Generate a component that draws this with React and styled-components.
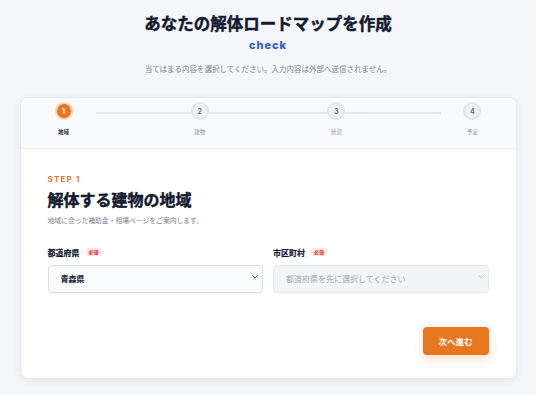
import React from 'react';
import styled, { createGlobalStyle, css } from 'styled-components';

const GlobalStyle = createGlobalStyle`
  html, body {
    margin: 0;
    padding: 0;
    background: #f4f6f9;
  }
  body {
    font-family: "Noto Sans CJK JP", "Noto Sans", sans-serif;
    color: #111a2e;
  }
`

const jp = `"Noto Sans CJK JP", "Noto Sans", sans-serif`;

// the installed CJK font tops out at bold, so heavy titles get a thin stroke
const heavy = w => css`
  font-weight: 700;
  -webkit-text-stroke: ${w} currentColor;
`

const Page = styled.div`
  padding-top: 13px;
  padding-bottom: 16px;
`

const Header = styled.header`
  display: flex;
  flex-direction: column;
  align-items: center;
`

const Title = styled.h1`
  margin: 0;
  font-family: ${jp};
  font-size: 16.5px;
  line-height: 20px;
  ${heavy('0.45px')}
  color: #111a2e;
`

const Check = styled.div`
  margin-top: 4px;
  font-family: Inter, "Noto Sans", sans-serif;
  font-size: 11px;
  line-height: 16px;
  font-weight: 800;
  letter-spacing: 1px;
  color: #2d5bd3;
`

const Lead = styled.p`
  margin: 10px 0 0;
  font-size: 7.5px;
  line-height: 12px;
  color: #7a8190;
`

const Card = styled.section`
  width: 497px;
  margin: 22px auto 0;
  box-sizing: border-box;
  background: #fff;
  border: 1px solid #e6e9ee;
  border-radius: 8px;
  box-shadow: 0 2px 10px rgba(15, 23, 42, 0.06);
  overflow: hidden;
`

const Stepper = styled.div`
  display: flex;
  align-items: flex-start;
  padding: 4px 34px 12px;
  background: #f9fafb;
  border-bottom: 1px solid #eef0f3;
`

const StepItem = styled.div`
  width: 18px;
  display: flex;
  flex-direction: column;
  align-items: center;
`

const Circle = styled.div`
  width: 14px;
  height: 14px;
  margin: 2px;
  border-radius: 50%;
  display: flex;
  align-items: center;
  justify-content: center;
  font-family: Inter, sans-serif;
  font-size: 7px;
  font-weight: 700;
  background: #eef1f5;
  color: #6b7280;
  box-shadow: 0 0 0 2px #dfe4ea;
  ${props => props.active && css`
    background: #e8761f;
    color: #fff;
    box-shadow: 0 0 0 2px #fbd5b5;
  `}
`

const StepLabel = styled.div`
  margin-top: 8px;
  white-space: nowrap;
  font-size: 5.5px;
  line-height: 8px;
  color: #8a919c;
  ${props => props.active && css`
    color: #1f2937;
    font-weight: 700;
  `}
`

/* each connector takes an equal share; the line itself is trimmed at the ends */
const Connector = styled.div`
  flex: 1;
  display: flex;
  height: 2px;
  margin-top: 10px;
  &::before {
    content: '';
    flex: 1;
    background: #e3e7ec;
    margin-left: ${props => (props.first ? '23px' : '0')};
    margin-right: ${props => (props.last ? '22px' : '0')};
  }
`

const Body = styled.div`
  padding: 25px 27px 23px;
`

const StepTag = styled.div`
  font-family: Inter, sans-serif;
  font-size: 8px;
  line-height: 10px;
  font-weight: 700;
  letter-spacing: 1.2px;
  color: #e0712a;
`

const Heading = styled.h2`
  margin: 4px 0 0;
  font-size: 16px;
  line-height: 22px;
  ${heavy('0.45px')}
  color: #111a2e;
`

const Desc = styled.p`
  margin: 5px 0 0;
  font-size: 6.8px;
  line-height: 10px;
  color: #7a8190;
`

const Fields = styled.div`
  display: grid;
  grid-template-columns: 1fr 1fr;
  gap: 10px;
  margin-top: 22px;
`

const Field = styled.div`
  display: flex;
  flex-direction: column;
`

const LabelRow = styled.div`
  display: flex;
  align-items: center;
  height: 10px;
`

const Label = styled.label`
  font-size: 8px;
  ${heavy('0.2px')}
  color: #111a2e;
`

const Badge = styled.span`
  margin-left: 6px;
  padding: 1px 3px;
  border-radius: 2px;
  font-size: 5px;
  line-height: 6px;
  font-weight: 700;
  color: #dc2626;
  background: #fde8e8;
`

const SelectWrap = styled.div`
  position: relative;
  margin-top: 6px;
`

const Select = styled.select`
  width: 100%;
  height: 28px;
  box-sizing: border-box;
  appearance: none;
  padding: 0 12px;
  border: 1px solid #d9dee5;
  border-radius: 4px;
  background: #fafbfc;
  font-family: ${jp};
  font-size: 8px;
  ${heavy('0.15px')}
  color: #1f2937;
  outline: none;
  &:disabled {
    background: #f3f4f6;
    border-color: #e5e7eb;
    color: #a3a9b3;
    font-weight: 400;
    -webkit-text-stroke: 0;
    opacity: 1;
  }
`

const Chevron = styled.svg`
  position: absolute;
  right: 5px;
  top: 12px;
  width: 6px;
  height: 4px;
  pointer-events: none;
  color: ${props => (props.muted ? '#b8bdc6' : '#4b5563')};
`

const Actions = styled.div`
  display: flex;
  justify-content: flex-end;
  margin-top: 34px;
`

const NextButton = styled.button`
  width: 66px;
  height: 28px;
  border: none;
  border-radius: 4px;
  background: #e8761f;
  color: #fff;
  font-family: ${jp};
  font-size: 8.5px;
  font-weight: 700;
  box-shadow: 0 4px 10px rgba(232, 118, 31, 0.25);
  cursor: pointer;
`

const steps = ['地域', '建物', '状況', '予定'];

function ChevronIcon({ muted }) {
  return (
    <Chevron muted={muted} viewBox="0 0 6 4" fill="none">
      <path d="M0.8 0.8 L3 3 L5.2 0.8" stroke="currentColor" strokeWidth="1" strokeLinecap="round" strokeLinejoin="round" />
    </Chevron>
  );
}

function StepBar({ current }) {
  return (
    <Stepper>
      {steps.map((label, i) => (
        <React.Fragment key={label}>
          {i > 0 && <Connector first={i === 1} last={i === steps.length - 1} />}
          <StepItem>
            <Circle active={i === current}>{i + 1}</Circle>
            <StepLabel active={i === current}>{label}</StepLabel>
          </StepItem>
        </React.Fragment>
      ))}
    </Stepper>
  );
}

export default function App() {
  return (
    <>
      <GlobalStyle />
      <Page>
        <Header>
          <Title>あなたの解体ロードマップを作成</Title>
          <Check>check</Check>
          <Lead>当てはまる内容を選択してください。入力内容は外部へ送信されません。</Lead>
        </Header>
        <Card>
          <StepBar current={0} />
          <Body>
            <StepTag>STEP 1</StepTag>
            <Heading>解体する建物の地域</Heading>
            <Desc>地域に合った補助金・相場ページをご案内します。</Desc>
            <Fields>
              <Field>
                <LabelRow>
                  <Label>都道府県</Label>
                  <Badge>必須</Badge>
                </LabelRow>
                <SelectWrap>
                  <Select defaultValue="aomori">
                    <option value="aomori">青森県</option>
                  </Select>
                  <ChevronIcon />
                </SelectWrap>
              </Field>
              <Field>
                <LabelRow>
                  <Label>市区町村</Label>
                  <Badge>必須</Badge>
                </LabelRow>
                <SelectWrap>
                  <Select disabled defaultValue="">
                    <option value="">都道府県を先に選択してください</option>
                  </Select>
                  <ChevronIcon muted />
                </SelectWrap>
              </Field>
            </Fields>
            <Actions>
              <NextButton>次へ進む</NextButton>
            </Actions>
          </Body>
        </Card>
      </Page>
    </>
  );
}
